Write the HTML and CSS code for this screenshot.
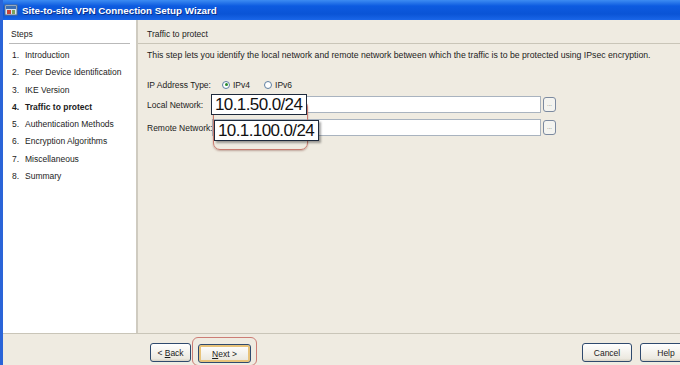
FILE: index.html
```html
<!DOCTYPE html>
<html>
<head>
  <title>Site-to-site VPN Connection Setup Wizard</title>
  <link rel="stylesheet" href="styles.css">
</head>
<body>
  <div class="window">
    <!-- Title bar -->
    <div class="titlebar">
      <svg class="app-icon" width="14" height="14" viewBox="0 0 14 14">
        <rect x="1" y="2" width="12" height="10" fill="#d8e4f0" stroke="#5a6f86"/>
        <rect x="2" y="3" width="10" height="3" fill="#3b6fb5"/>
        <rect x="3" y="7" width="4" height="4" fill="#c9433a"/>
        <rect x="8" y="7" width="3" height="4" fill="#7aa35c"/>
      </svg>
      <span class="title">Site-to-site VPN Connection Setup Wizard</span>
    </div>

    <div class="main">
      <!-- Steps list -->
      <div class="steps">
        <div class="steps-head">Steps</div>
        <ol class="step-list">
          <li><span class="num">1.</span>Introduction</li>
          <li><span class="num">2.</span>Peer Device Identification</li>
          <li><span class="num">3.</span>IKE Version</li>
          <li class="current"><span class="num">4.</span>Traffic to protect</li>
          <li><span class="num">5.</span>Authentication Methods</li>
          <li><span class="num">6.</span>Encryption Algorithms</li>
          <li><span class="num">7.</span>Miscellaneous</li>
          <li><span class="num">8.</span>Summary</li>
        </ol>
      </div>

      <!-- Step content -->
      <div class="content">
        <div class="content-head">Traffic to protect</div>
        <p class="desc">This step lets you identify the local network and remote network between which the traffic is to be protected using IPsec encryption.</p>

        <div class="form">
          <div class="row ip-type">
            <span class="label">IP Address Type:</span>
            <span class="radio checked"></span><span class="radio-text">IPv4</span>
            <span class="radio"></span><span class="radio-text">IPv6</span>
          </div>
          <div class="row">
            <span class="label">Local Network:</span>
            <span class="field"></span>
            <span class="browse">...</span>
          </div>
          <div class="row">
            <span class="label">Remote Network:</span>
            <span class="field"></span>
            <span class="browse">...</span>
          </div>

          <!-- annotation overlays -->
          <div class="highlight"></div>
          <div class="callout local">10.1.50.0/24</div>
          <div class="callout remote">10.1.100.0/24</div>
        </div>
      </div>
    </div>

    <!-- Buttons -->
    <div class="footer">
      <div class="nav-buttons">
        <button class="btn back">&lt; <u>B</u>ack</button>
        <span class="next-wrap"><button class="btn next"><u>N</u>ext &gt;</button></span>
      </div>
      <div class="end-buttons">
        <button class="btn cancel">Cancel</button>
        <button class="btn help">Help</button>
      </div>
    </div>
  </div>
</body>
</html>
```

FILE: styles.css
```css
body {
  margin: 0;
  font-family: "Liberation Sans", Arial, sans-serif;
  font-size: 8.5px;
  color: #1c1c1c;
  background-color: #efebe1;
}

.window {
  width: 680px;
  height: 365px;
  overflow: hidden;
  border-left: 3px solid #2a64d8;
  box-sizing: border-box;
  display: flex;
  flex-direction: column;
}

.titlebar {
  height: 20px;
  flex: none;
  display: flex;
  align-items: center;
  gap: 4px;
  padding-left: 1px;
  background: linear-gradient(to bottom, #3d8cf2 0%, #0d5be0 30%, #0a54d6 70%, #1a66e8 100%);
}

.title {
  color: #fff;
  font-weight: bold;
  font-size: 9.8px;
  text-shadow: 1px 1px 0 #0a2f8a;
}

.main {
  flex: 1;
  display: flex;
  border-bottom: 1px solid #c9c5b8;
}

.steps {
  width: 135px;
  flex: none;
  background-color: #fff;
  border-right: 2px solid #cfcbc0;
  padding: 9px 6px 0 6px;
  box-sizing: border-box;
}

.steps-head {
  padding: 0 0 4px 2px;
  border-bottom: 1px solid #b9b9b9;
  margin-bottom: 3px;
}

.step-list {
  list-style: none;
  margin: 0;
  padding: 0 0 0 3px;
}

.step-list li {
  height: 17.3px;
  line-height: 17.3px;
  white-space: nowrap;
}

.step-list .num {
  display: inline-block;
  width: 13px;
}

.step-list .current {
  font-weight: bold;
}

.content {
  flex: 1;
  padding-top: 9px;
}

.content-head {
  padding: 0 0 4px 9px;
  border-bottom: 1px solid #c9c5b8;
}

.desc {
  margin: 6px 0 0 9px;
  white-space: nowrap;
  font-size: 8.7px;
}

.form {
  position: relative;
  margin: 16px 0 0 9px;
  width: 420px;
}

.row {
  display: flex;
  align-items: center;
  height: 17px;
  margin-bottom: 6px;
}

.ip-type {
  margin-bottom: 3px;
}

.label {
  width: 65px;
  flex: none;
  white-space: nowrap;
}

.ip-type .label {
  width: 75px;
}

.radio {
  width: 8px;
  height: 8px;
  border: 1px solid #5f7fa2;
  border-radius: 50%;
  background-color: #fff;
  box-sizing: border-box;
  margin-right: 3px;
  position: relative;
}

.radio.checked::after {
  content: "";
  position: absolute;
  left: 1.5px;
  top: 1.5px;
  width: 3px;
  height: 3px;
  border-radius: 50%;
  background-color: #2a8a2a;
}

.radio-text {
  margin-right: 14px;
}

.field {
  width: 329px;
  height: 17px;
  flex: none;
  background-color: #fff;
  border: 1px solid #a9b3bf;
  box-sizing: border-box;
  margin-right: 2px;
}

.browse {
  width: 13px;
  height: 15px;
  border: 1px solid #7c8aa0;
  border-radius: 3px;
  background-color: #f4f4f0;
  box-sizing: border-box;
  font-size: 6px;
  text-align: center;
  line-height: 12px;
  color: #555;
}

.highlight {
  position: absolute;
  left: 66px;
  top: 24px;
  width: 93px;
  height: 48px;
  border: 1.5px solid #c87a6e;
  border-radius: 7px;
  box-shadow: 0 1px 2px rgba(120, 60, 50, 0.4);
}

.callout {
  position: absolute;
  background-color: #fff;
  border: 1px solid #1e2a3c;
  font-size: 17px;
  letter-spacing: -0.6px;
  line-height: 19px;
  padding: 0 4px 0 3px;
  color: #111;
  white-space: nowrap;
}

.callout.local {
  left: 64px;
  top: 18px;
}

.callout.remote {
  left: 67px;
  top: 44px;
  box-shadow: 2px 2px 2px rgba(0, 0, 0, 0.35);
}

.footer {
  height: 31px;
  flex: none;
  display: flex;
  justify-content: space-between;
  align-items: flex-end;
  padding-left: 147px;
}

.nav-buttons {
  display: flex;
  align-items: flex-end;
  gap: 1px;
}

.end-buttons {
  display: flex;
  gap: 8px;
  margin-right: -12px;
  padding-bottom: 3px;
}

.btn {
  font-family: inherit;
  font-size: 8.5px;
  height: 19px;
  padding: 0;
  background: linear-gradient(to bottom, #ffffff, #ece9e0 85%, #d6d2c4);
  border: 1px solid #2f4a6e;
  border-radius: 3px;
  color: #1c1c1c;
}

.back {
  width: 41px;
  margin-bottom: 3px;
}

.next-wrap {
  display: inline-flex;
  padding: 6px 5px 2px 5px;
  border: 1.5px solid #cc7d75;
  border-radius: 6px;
  margin-bottom: -1px;
}

.next {
  width: 53px;
  box-shadow: inset 0 0 0 2px #e8c37a;
}

.cancel {
  width: 50px;
}

.help {
  width: 52px;
}
```
